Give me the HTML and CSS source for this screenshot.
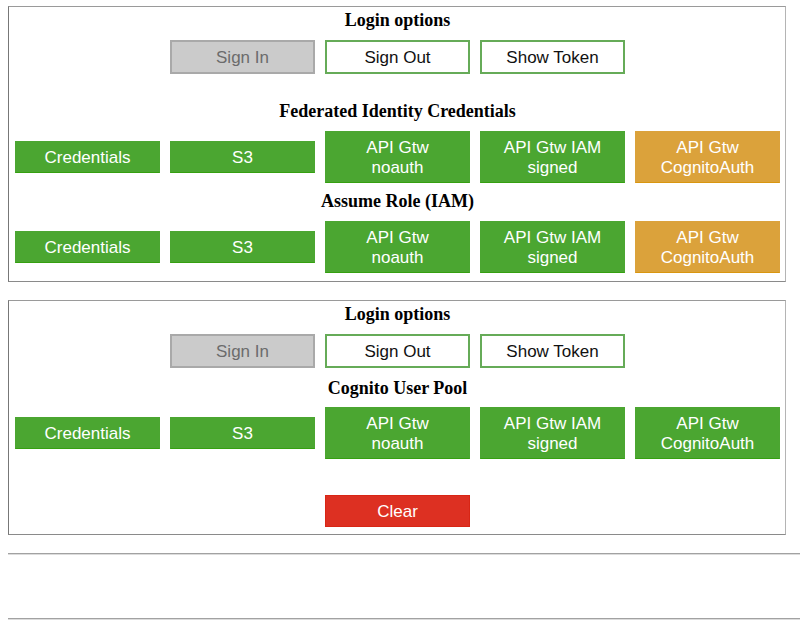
FILE: index.html
```html
<!DOCTYPE html>
<html>
<head>
<meta charset="utf-8">
<link rel="stylesheet" href="styles.css">
</head>
<body>
<div class="page">
  <section class="box box-federated">
    <div class="title">Login options</div>
    <div class="row row-login">
      <button class="btn btn-disabled col2">Sign In</button>
      <button class="btn btn-outline">Sign Out</button>
      <button class="btn btn-outline">Show Token</button>
    </div>
    <div class="title title-spaced">Federated Identity Credentials</div>
    <div class="row row-actions">
      <button class="btn btn-green">Credentials</button>
      <button class="btn btn-green">S3</button>
      <button class="btn btn-green">API Gtw<br>noauth</button>
      <button class="btn btn-green">API Gtw IAM<br>signed</button>
      <button class="btn btn-orange">API Gtw<br>CognitoAuth</button>
    </div>
    <div class="title title-tight">Assume Role (IAM)</div>
    <div class="row row-actions">
      <button class="btn btn-green">Credentials</button>
      <button class="btn btn-green">S3</button>
      <button class="btn btn-green">API Gtw<br>noauth</button>
      <button class="btn btn-green">API Gtw IAM<br>signed</button>
      <button class="btn btn-orange">API Gtw<br>CognitoAuth</button>
    </div>
  </section>

  <section class="box box-pool">
    <div class="title">Login options</div>
    <div class="row row-login">
      <button class="btn btn-disabled col2">Sign In</button>
      <button class="btn btn-outline">Sign Out</button>
      <button class="btn btn-outline">Show Token</button>
    </div>
    <div class="title title-pool">Cognito User Pool</div>
    <div class="row row-pool">
      <button class="btn btn-green">Credentials</button>
      <button class="btn btn-green">S3</button>
      <button class="btn btn-green">API Gtw<br>noauth</button>
      <button class="btn btn-green">API Gtw IAM<br>signed</button>
      <button class="btn btn-green">API Gtw<br>CognitoAuth</button>
    </div>
    <div class="row row-clear">
      <button class="btn btn-red col3">Clear</button>
    </div>
  </section>

  <hr class="rule rule-first">
  <div class="output"></div>
  <hr class="rule">
</div>
</body>
</html>
```

FILE: styles.css
```css
html, body {
  margin: 0;
  padding: 0;
  background: #ffffff;
}

.page {
  padding: 6px 0 0 8px;
}

.box {
  width: 778px;
  box-sizing: border-box;
  border: 1px solid #8a8a8a;
  border-top-color: #9a9a9a;
  border-right-color: #b4b4b4;
  border-left-color: #777777;
  padding: 0 5px 8px 6px;
}

.box-pool {
  margin-top: 18px;
  padding-bottom: 7px;
}

.title {
  font-family: "Liberation Serif", "Times New Roman", serif;
  font-weight: bold;
  font-size: 18px;
  line-height: 22px;
  text-align: center;
  color: #000;
  margin-top: 2px;
}

.title-spaced { margin-top: 26px; }
.title-tight { margin-top: 7px; }
.title-pool { margin-top: 9px; }

.row {
  display: grid;
  grid-template-columns: repeat(5, 1fr);
  column-gap: 10px;
  align-items: center;
  margin-top: 9px;
}

.row-pool { margin-top: 8px; }
.row-clear { margin-top: 36px; }

.col2 { grid-column: 2; }
.col3 { grid-column: 3; }

.btn {
  font-family: "Liberation Sans", Arial, Helvetica, sans-serif;
  font-size: 17px;
  line-height: 20px;
  text-align: center;
  margin: 0;
  padding: 6px 4px 4px;
  border: 1px solid transparent;
  border-radius: 0;
  width: 100%;
  box-sizing: border-box;
  cursor: pointer;
}

.btn-green {
  background: #4ba631;
  border-color: #4ba631 #4ba631 #35a010 #4ba631;
  color: #ffffff;
}

.btn-orange {
  background: #dba23b;
  border-color: #dba23b #dba23b #d9960f #dba23b;
  color: #ffffff;
}

.btn-red {
  background: #dd3022;
  border-color: #d82615;
  color: #ffffff;
}

.btn-outline {
  background: #ffffff;
  border: 2px solid #66ab58;
  color: #111111;
  padding: 6px 4px 4px;
}

.btn-disabled {
  background: #cbcbcb;
  border: 2px solid #a9a9a9;
  color: #6b6b6b;
  padding: 6px 4px 4px;
}

.rule {
  margin: 0;
  height: 0;
  border: 0;
  border-top: 1px solid #a2a2a2;
  border-bottom: 1px solid #dcdcdc;
}

.rule-first {
  margin-top: 18px;
}

.output {
  height: 63px;
}
```
